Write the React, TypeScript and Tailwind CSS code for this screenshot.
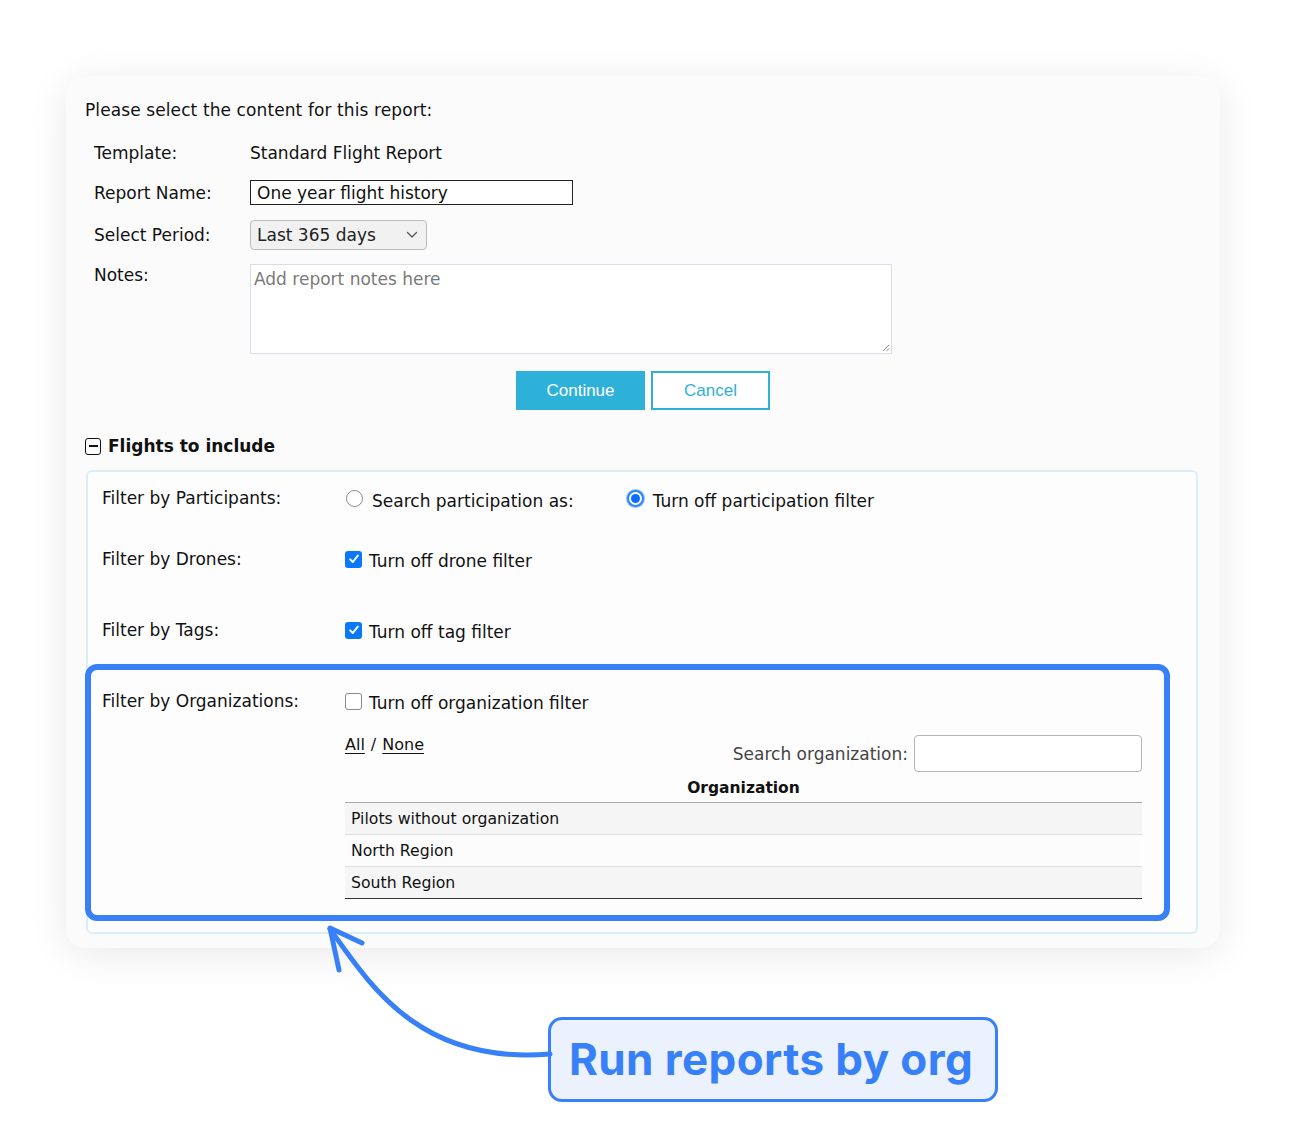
import React from "react";

function Radio({ checked }: { checked?: boolean }) {
  if (checked) {
    return (
      <span className="flex h-[17px] w-[17px] shrink-0 items-center justify-center rounded-full bg-[#2f86fb] shadow-[0_0_0_1px_#8fbdfd]">
        <span className="flex h-[13px] w-[13px] items-center justify-center rounded-full bg-white">
          <span className="block h-[9px] w-[9px] rounded-full bg-[#0a6dfb]" />
        </span>
      </span>
    );
  }
  return <span className="block h-[17px] w-[17px] shrink-0 rounded-full border border-[#8a8a8a] bg-white" />;
}

function Check({ checked }: { checked?: boolean }) {
  if (checked) {
    return (
      <span className="flex h-[17px] w-[17px] shrink-0 items-center justify-center rounded-[3px] bg-[#0b79f7]">
        <svg width="12" height="12" viewBox="0 0 12 12" fill="none">
          <path d="M2.2 6.4 L4.8 9 L9.8 2.6" stroke="white" strokeWidth="2" strokeLinecap="round" strokeLinejoin="round" />
        </svg>
      </span>
    );
  }
  return <span className="block h-[17px] w-[17px] shrink-0 rounded-[3px] border border-[#8a8a8a] bg-white" />;
}

export default function App() {
  return (
    <div className="relative min-h-[1121px] w-[1293px] overflow-hidden bg-white pl-[66px] pt-[76px] font-['DejaVu_Sans',Verdana,sans-serif] text-[#111]">
      <div className="h-[872px] w-[1154px] rounded-[20px] bg-[#fbfbfb] px-[20px] pt-[24px] shadow-[0_6px_40px_rgba(0,0,0,0.09)]">
        <div className="-ml-[1px] text-[17px] leading-[20px] tracking-[0.1px]">Please select the content for this report:</div>

        <div className="ml-[8px] mt-[21px] flex flex-col text-[17px] leading-[20px]">
          <div className="flex h-[24px] items-center">
            <div className="w-[156px]">Template:</div>
            <div>Standard Flight Report</div>
          </div>
          <div className="mt-[15px] flex h-[25px] items-center">
            <div className="w-[156px]">Report Name:</div>
            <div className="flex h-[25px] w-[323px] items-center border-[1.5px] border-[#222] bg-white pl-[6px] pt-[1px]">One year flight history</div>
          </div>
          <div className="mt-[15px] flex h-[30px] items-center">
            <div className="w-[156px]">Select Period:</div>
            <div className="flex h-[30px] w-[177px] items-center justify-between rounded-[4px] border border-[#bdbdbd] bg-[#f1f1f1] pl-[6px] pr-[8px] text-[#222]">
              <span>Last 365 days</span>
              <svg width="12" height="8" viewBox="0 0 12 8" fill="none">
                <path d="M1.5 1.5 L6 6 L10.5 1.5" stroke="#555" strokeWidth="1.3" strokeLinecap="round" strokeLinejoin="round" />
              </svg>
            </div>
          </div>
          <div className="mt-[14px] flex items-start">
            <div className="w-[156px] pt-[1px]">Notes:</div>
            <div className="relative h-[90px] w-[642px] border border-[#dcdce8] bg-white px-[3px] pt-[4px] text-[#7a7a7a]">
              Add report notes here
              <svg className="absolute bottom-[1px] right-[1px]" width="9" height="9" viewBox="0 0 9 9" fill="none">
                <path d="M8 2 L2 8 M8 5.5 L5.5 8" stroke="#888" strokeWidth="1" />
              </svg>
            </div>
          </div>
        </div>

        <div className="mt-[17px] flex justify-center gap-[6px] font-['Liberation_Sans',Arial,sans-serif] text-[17px]">
          <div className="flex h-[39px] w-[129px] items-center justify-center bg-[#2eb1d8] text-white">Continue</div>
          <div className="flex h-[39px] w-[119px] items-center justify-center border-2 border-[#2eb1d8] bg-white text-[#2eb1d8]">Cancel</div>
        </div>

        <div className="-ml-[1px] mt-[26px] flex h-[20px] items-center gap-[7px]">
          <span className="flex h-[17px] w-[16px] items-center justify-center rounded-[3px] border-[1.5px] border-[#111]">
            <span className="block h-[1.5px] w-[9px] bg-[#111]" />
          </span>
          <span className="text-[17px] font-bold leading-[20px]">Flights to include</span>
        </div>

        <div className="mr-[2px] mt-[14px] rounded-[6px] border-2 border-[#dbeef6] bg-[#fdfdfd] pb-[11px] pl-[14px] pt-[14px] text-[17px] leading-[20px]">
          <div className="flex h-[24px] items-center">
            <div className="w-[243px]">Filter by Participants:</div>
            <div className="flex items-center">
              <span className="ml-[1px] block"><Radio /></span>
              <span className="ml-[9px] mt-[5px]">Search participation as:</span>
              <span className="ml-[53px] block"><Radio checked /></span>
              <span className="ml-[9px] mt-[5px]">Turn off participation filter</span>
            </div>
          </div>

          <div className="mt-[37px] flex h-[24px] items-center">
            <div className="w-[243px]">Filter by Drones:</div>
            <div className="flex items-center">
              <Check checked />
              <span className="ml-[7px] mt-[3px]">Turn off drone filter</span>
            </div>
          </div>

          <div className="mt-[47px] flex h-[24px] items-center">
            <div className="w-[243px]">Filter by Tags:</div>
            <div className="flex items-center">
              <Check checked />
              <span className="ml-[7px] mt-[3px]">Turn off tag filter</span>
            </div>
          </div>

          <div className="-ml-[17px] mr-[26px] mt-[22px] flex rounded-[12px] border-[6px] border-[#3880f8] pb-[16px] pl-[11px] pt-[19px]">
            <div className="w-[243px] pt-[2px]">Filter by Organizations:</div>
            <div className="flex w-[797px] flex-col">
              <div className="flex h-[24px] items-center">
                <Check />
                <span className="ml-[7px] mt-[3px]">Turn off organization filter</span>
              </div>
              <div className="mt-[22px] flex items-start justify-between">
                <div className="flex h-[20px] items-center text-[16px]">
                  <span className="underline underline-offset-[3px]">All</span>
                  <span className="mx-[6px]">/</span>
                  <span className="underline underline-offset-[3px]">None</span>
                </div>
                <div className="flex items-center gap-[6px]">
                  <span className="text-[#444]">Search organization:</span>
                  <span className="block h-[37px] w-[228px] rounded-[4px] border border-[#b5b5b5] bg-white" />
                </div>
              </div>
              <div className="flex h-[31px] items-center justify-center border-b border-[#a8a8a8] pt-[1px] text-[15.5px] font-bold">Organization</div>
              <div className="flex h-[32px] items-center border-b border-[#dddddd] bg-[#f5f5f5] pl-[6px] text-[15.7px]">Pilots without organization</div>
              <div className="flex h-[32px] items-center border-b border-[#dddddd] bg-[#fcfcfc] pl-[6px] text-[15.7px]">North Region</div>
              <div className="flex h-[32px] items-center border-b-[1.5px] border-[#333] bg-[#f5f5f5] pl-[6px] text-[15.7px]">South Region</div>
            </div>
          </div>
        </div>
      </div>

      <div className="ml-[482px] mt-[69px] flex h-[85px] w-[450px] items-center rounded-[14px] border-[3px] border-[#3880f8] bg-[#ebf2fe] pb-[2px] pl-[18px] font-['Inter',sans-serif] text-[44px] font-bold leading-none tracking-[0.4px] text-[#3880f8]">
        Run reports by org
      </div>

      <svg className="absolute left-[310px] top-[915px]" width="250" height="160" viewBox="0 0 250 160" fill="none">
        <path d="M20 14 C 60 70, 110 150, 240 139" stroke="#3880f8" strokeWidth="5" strokeLinecap="round" fill="none" />
        <path d="M52 28 L20 13 L29 55" stroke="#3880f8" strokeWidth="5" strokeLinecap="round" strokeLinejoin="round" fill="none" />
      </svg>
    </div>
  );
}
